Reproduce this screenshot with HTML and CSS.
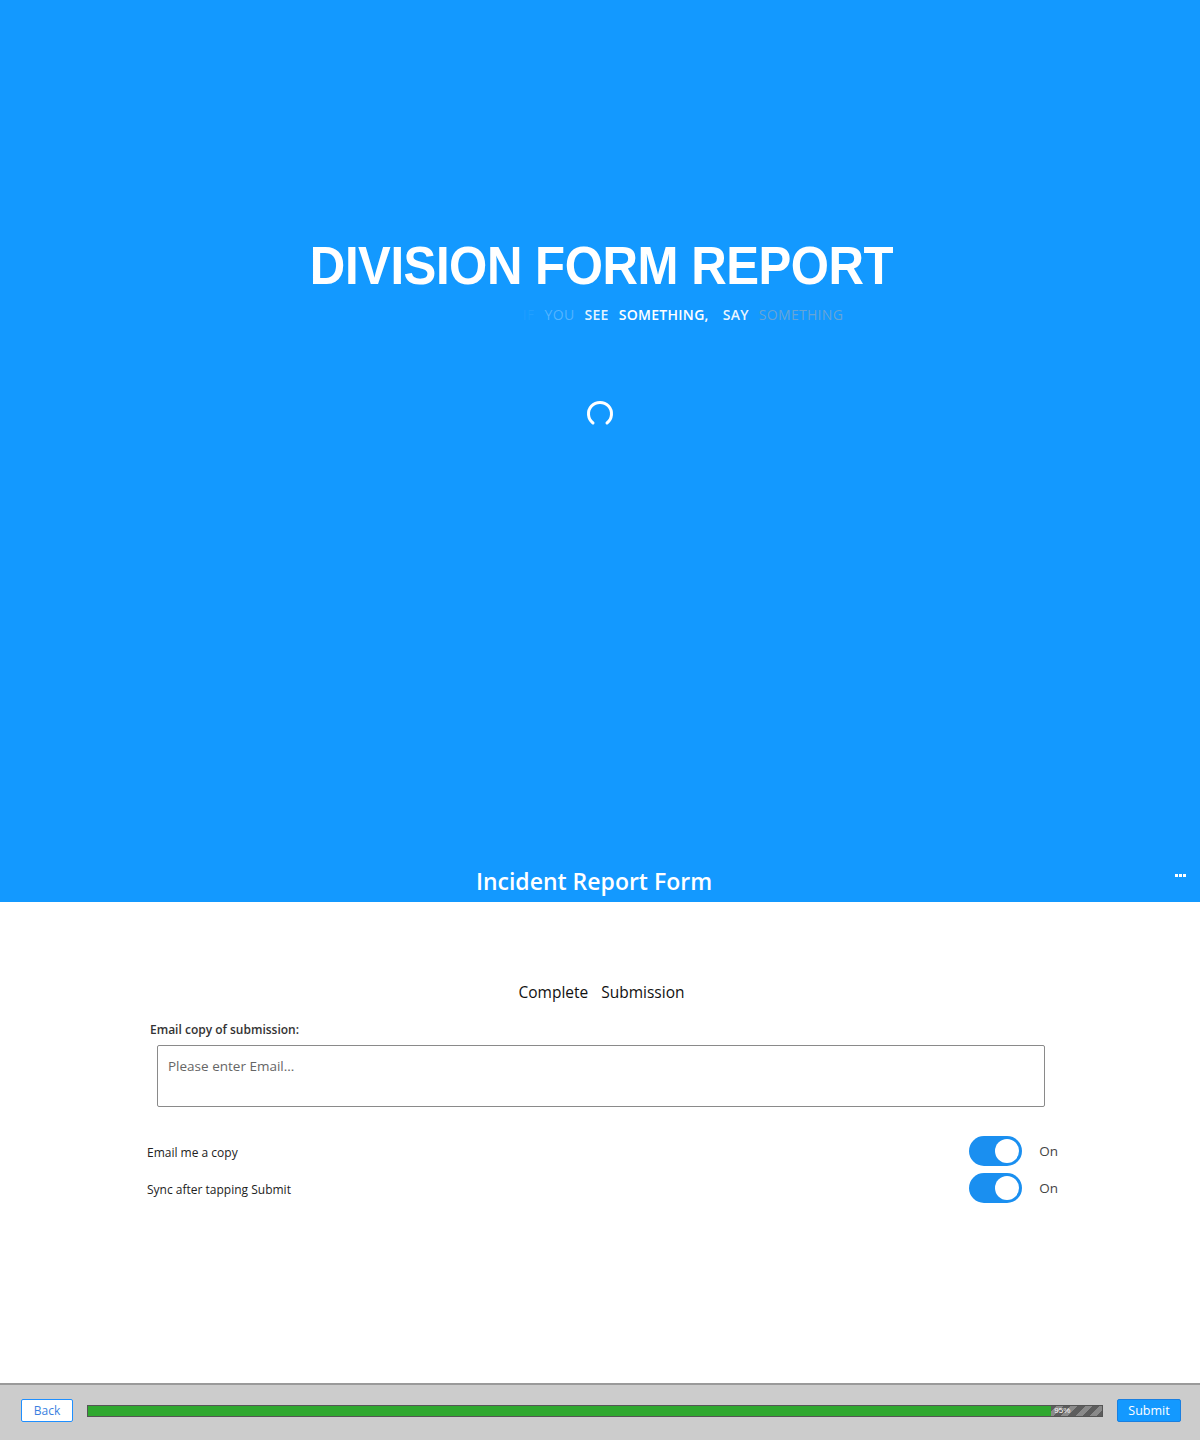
FILE: index.html
```html
<!DOCTYPE html>
<html>
<head>
<meta charset="utf-8">
<link rel="stylesheet" href="styles.css">
</head>
<body>
<div class="page">
  <section class="hero">
    <div class="hero-main">
      <h1 class="brand">DIVISION FORM REPORT</h1>
      <div class="tagline">
        <span class="w w1">IF</span>
        <span class="w w2">YOU</span>
        <span class="w w3">SEE</span>
        <span class="w w4">SOMETHING,</span>
        <span class="w w5">SAY</span>
        <span class="w w6">SOMETHING</span>
      </div>
      <svg class="spinner" width="30" height="30" viewBox="0 0 30 30">
        <path d="M8 23 A11.5 11.5 0 1 1 22 23" fill="none" stroke="#fff" stroke-width="3" stroke-linecap="round"/>
      </svg>
    </div>
    <header class="titlebar">
      <div class="title">Incident Report Form</div>
      <div class="dots"><i></i><i></i><i></i></div>
    </header>
  </section>

  <main class="content">
    <div class="section-title"><span>Complete</span><span>Submission</span></div>
    <label class="field-label">Email copy of submission:</label>
    <div class="email-box">Please enter Email...</div>

    <div class="toggle-row">
      <span class="toggle-label">Email me a copy</span>
      <div class="toggle-wrap"><span class="toggle"><span class="knob"></span></span><span class="on">On</span></div>
    </div>
    <div class="toggle-row">
      <span class="toggle-label">Sync after tapping Submit</span>
      <div class="toggle-wrap"><span class="toggle"><span class="knob"></span></span><span class="on">On</span></div>
    </div>
  </main>

  <footer class="footer">
    <button class="btn-back">Back</button>
    <div class="progress">
      <div class="progress-fill" style="width:95%"></div>
      <span class="progress-text">95%</span>
    </div>
    <button class="btn-submit">Submit</button>
  </footer>
</div>
</body>
</html>
```
FILE: styles.css
```css
* { box-sizing: border-box; }
html, body { margin: 0; padding: 0; }
body {
  width: 1200px;
  height: 1440px;
  font-family: "Open Sans", "Noto Sans", sans-serif;
  background: #fff;
  overflow: hidden;
}
.page {
  display: flex;
  flex-direction: column;
  height: 1440px;
}
.hero {
  background: #1399ff;
  height: 902px;
  display: flex;
  flex-direction: column;
}
.hero-main {
  flex: 1;
  display: flex;
  flex-direction: column;
  align-items: center;
  padding-top: 235px;
}
.brand {
  margin: 0;
  font-family: "Liberation Sans", Arial, sans-serif;
  font-weight: bold;
  font-size: 54px;
  line-height: 60px;
  color: #fff;
  letter-spacing: -0.5px;
  transform: scaleX(0.91);
  margin-left: 4px;
  white-space: nowrap;
}
.tagline {
  margin-top: 10px;
  font-size: 14px;
  line-height: 20px;
  display: flex;
  gap: 10px;
  padding-left: 166px;
}
.w { color: #fff; letter-spacing: 0.3px; }
.w1 { color: rgba(255,255,255,0.06); }
.w2 { color: rgba(255,255,255,0.28); font-weight: 400; }
.w3 { color: rgba(255,255,255,0.9); font-weight: 600; }
.w4 { color: #fff; font-weight: 600; margin-right: 4px; }
.w5 { color: rgba(255,255,255,0.92); font-weight: 600; }
.w6 { color: #66a5d6; font-weight: 400; }
.spinner {
  margin-top: 75px;
}
.titlebar {
  height: 40px;
  position: relative;
  display: flex;
  justify-content: center;
  align-items: center;
}
.title {
  color: #fff;
  font-size: 23px;
  font-weight: 600;
  margin-left: -12px;
  margin-top: -2px;
}
.dots {
  position: absolute;
  right: 14px;
  top: 12px;
  display: flex;
  gap: 1px;
}
.dots i {
  width: 3px; height: 3px; background: #fff; display: block;
}
.content {
  flex: 1;
  display: flex;
  flex-direction: column;
  padding: 79px 142px 0 147px;
}
.section-title {
  display: flex;
  justify-content: center;
  gap: 13px;
  font-size: 15.5px;
  color: #111;
  line-height: 22px;
  padding-right: 2px;
}
.field-label {
  margin-top: 18px;
  margin-left: 3px;
  font-size: 12px;
  font-weight: 600;
  color: #333;
  line-height: 18px;
}
.email-box {
  margin: 6px 13px 0 10px;
  height: 62px;
  border: 1px solid #8a8a8a;
  border-radius: 2px;
  padding: 10px 10px;
  font-size: 13.5px;
  color: #666;
  line-height: 20px;
}
.toggle-row {
  display: flex;
  justify-content: space-between;
  align-items: center;
  height: 37px;
}
.email-box + .toggle-row { margin-top: 27px; }
.toggle-label {
  font-size: 12px;
  color: #222;
}
.toggle-wrap {
  display: flex;
  align-items: center;
  gap: 17px;
}
.toggle {
  width: 53px;
  height: 30px;
  border-radius: 15px;
  background: #1a8ff0;
  position: relative;
  display: block;
  margin-top: -3px;
}
.knob {
  position: absolute;
  right: 3px;
  top: 3px;
  width: 24px;
  height: 24px;
  border-radius: 50%;
  background: #fff;
}
.on {
  font-size: 13.5px;
  color: #444;
  margin-top: -3px;
}
.footer {
  height: 57px;
  background: #cccccc;
  border-top: 2px solid #9a9a9a;
  display: flex;
  align-items: center;
  padding: 0 19px 4px 21px;
  gap: 14px;
}
.btn-back {
  width: 52px;
  height: 23px;
  background: #fff;
  border: 1px solid #1f8fff;
  border-radius: 2px;
  color: #3b7fe0;
  font-family: "Open Sans", sans-serif;
  font-size: 12px;
  padding: 0;
}
.progress {
  flex: 1;
  height: 12px;
  position: relative;
  border: 1px solid #555;
  background: repeating-linear-gradient(135deg, #5d5d5d 0 5px, #8a8a8a 5px 10px);
}
.progress-fill {
  height: 100%;
  background: #2fa82f;
}
.progress-text {
  position: absolute;
  left: 95%;
  margin-left: 3px;
  top: -2px;
  font-size: 8px;
  line-height: 14px;
  color: #fff;
  font-family: "Liberation Sans", sans-serif;
}
.btn-submit {
  width: 64px;
  height: 23px;
  background: #1399ff;
  border: 1px solid #1a7fe0;
  border-radius: 2px;
  color: #fff;
  font-family: "Open Sans", sans-serif;
  font-size: 12.5px;
  padding: 0;
}
```
